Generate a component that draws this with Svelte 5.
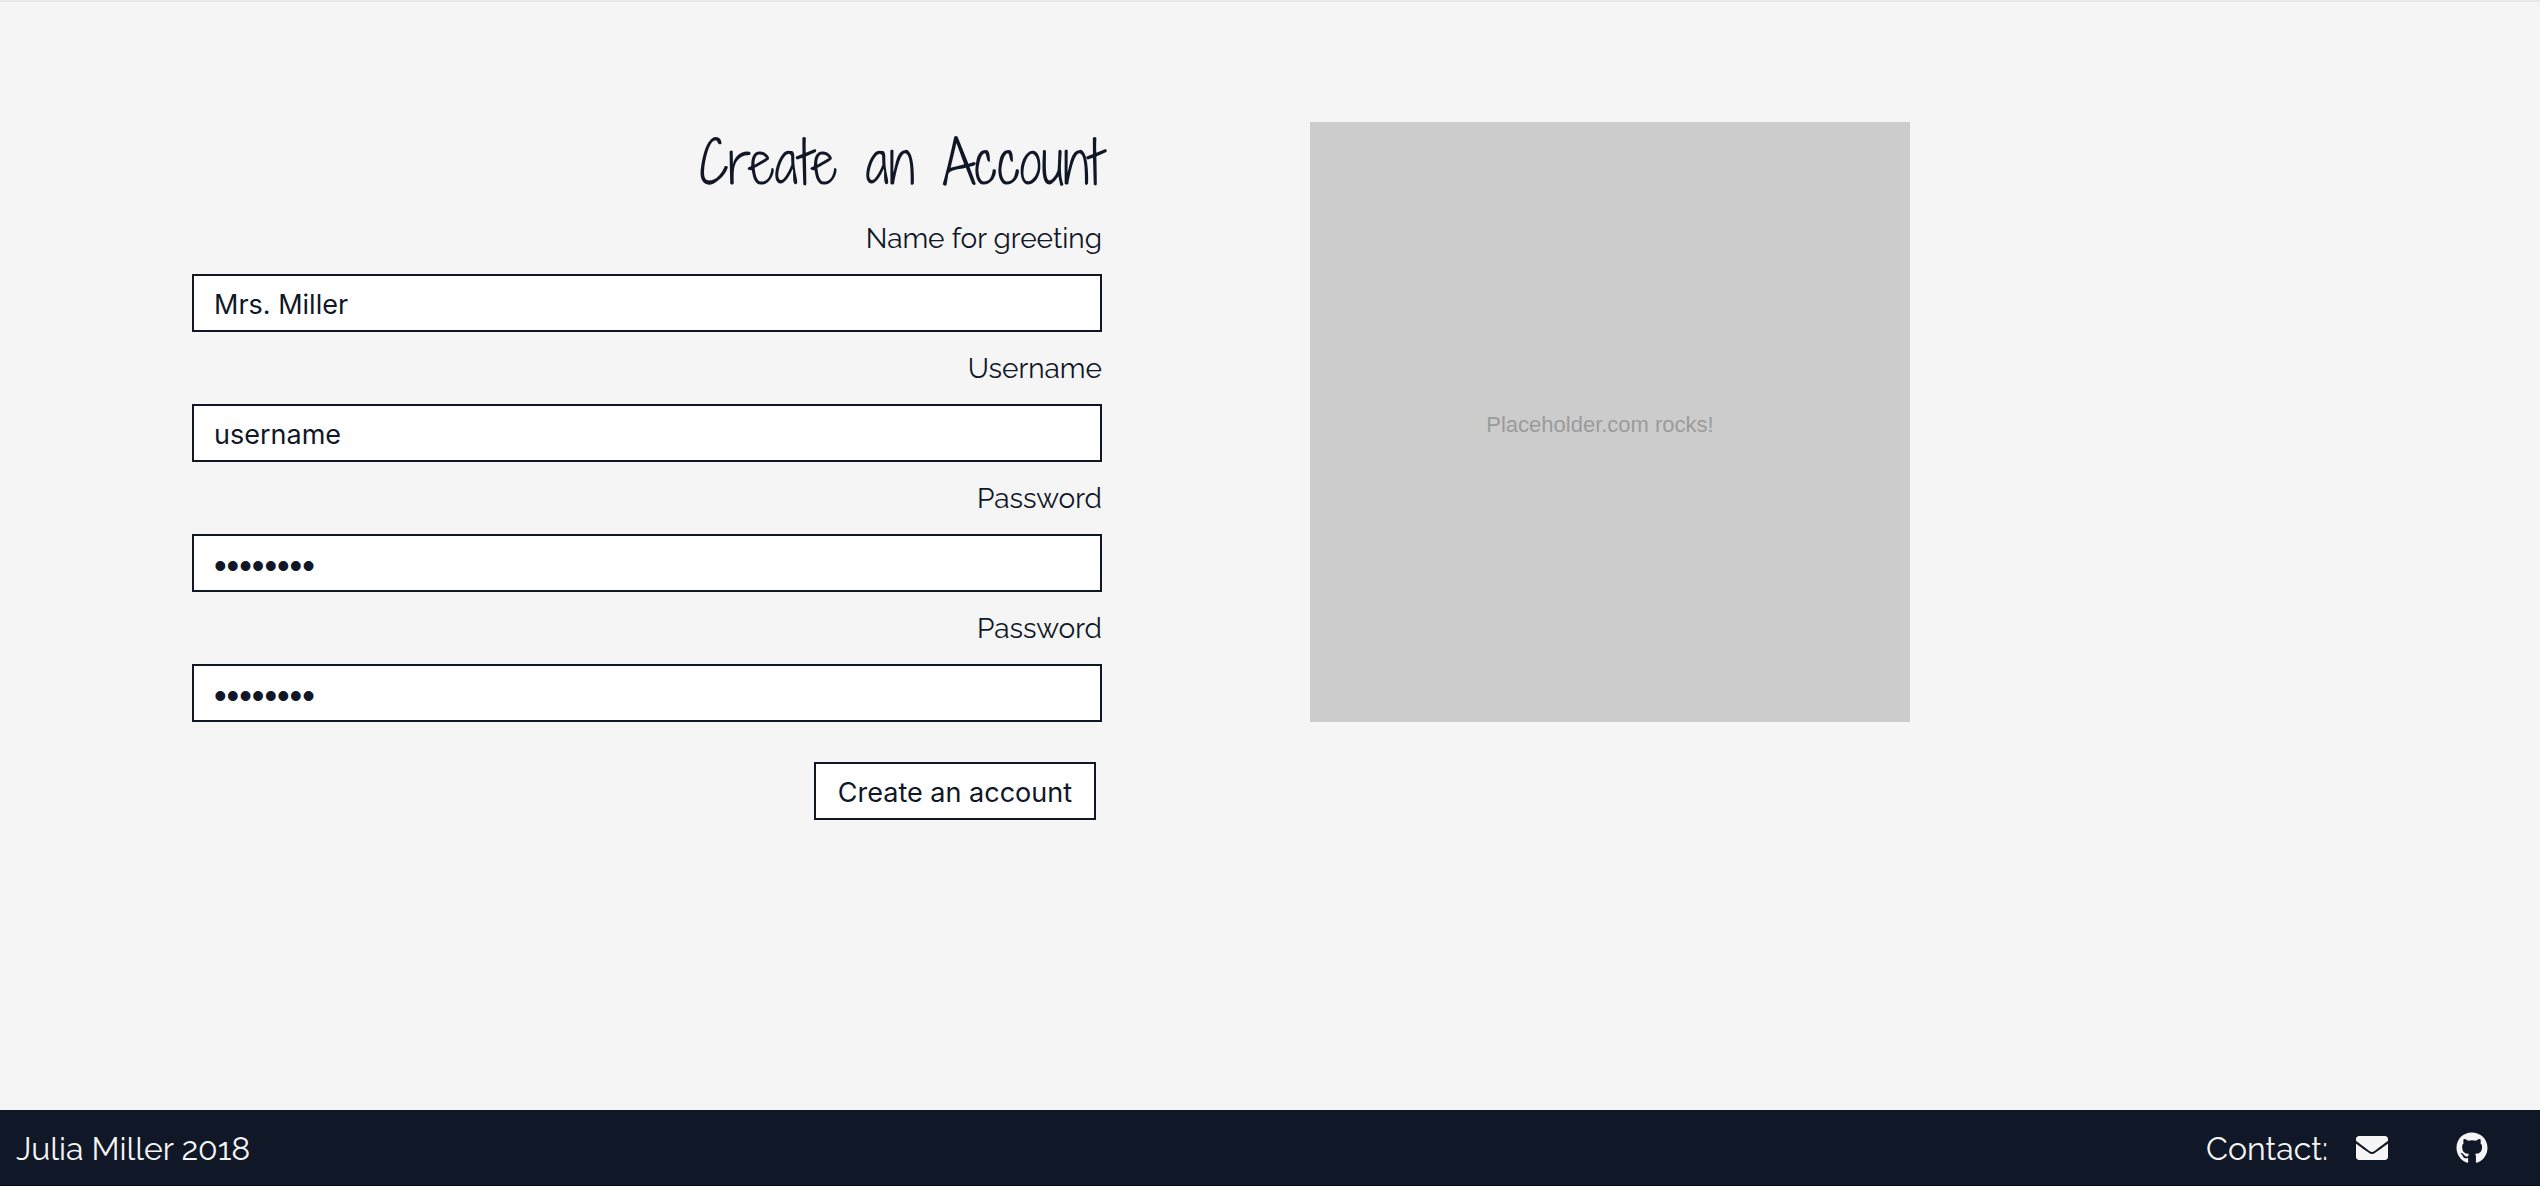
<script>
  let fields = $state([
    { id: 'greeting', label: 'Name for greeting', type: 'text', value: 'Mrs. Miller' },
    { id: 'username', label: 'Username', type: 'text', value: 'username' },
    { id: 'password', label: 'Password', type: 'password', value: 'password' },
    { id: 'password-confirm', label: 'Password', type: 'password', value: 'password' }
  ]);
</script>

<div class="page">
  <main>
    <form onsubmit={(event) => event.preventDefault()}>
      <h1>Create an Account</h1>
      {#each fields as field (field.id)}
        <label for={field.id}>{field.label}</label>
        <input id={field.id} type={field.type} bind:value={field.value} />
      {/each}
      <button type="submit">Create an account</button>
    </form>
    <div class="placeholder">Placeholder.com rocks!</div>
  </main>

  <footer>
    <span>Julia Miller 2018</span>
    <div class="contact">
      <span>Contact:</span>
      <a href="#email" aria-label="Email">
        <svg viewBox="0 0 512 512" aria-hidden="true">
          <path d="M502.3 190.8c3.9-3.1 9.7-.2 9.7 4.7V400c0 26.5-21.5 48-48 48H48c-26.5 0-48-21.5-48-48V195.6c0-5 5.7-7.8 9.7-4.7 22.4 17.4 52.1 39.5 154.1 113.6 21.1 15.4 56.7 47.8 92.2 47.6 35.7.3 72-32.8 92.3-47.6 102-74.1 131.6-96.3 154-113.7zM256 320c23.2.4 56.6-29.2 73.4-41.4 132.7-96.3 142.8-104.7 173.4-128.7 5.8-4.5 9.2-11.5 9.2-18.9v-19c0-26.5-21.5-48-48-48H48c-26.5 0-48 21.5-48 48v19c0 7.4 3.4 14.3 9.2 18.9 30.6 23.9 40.7 32.4 173.4 128.7 16.8 12.2 50.2 41.8 73.4 41.4z" />
        </svg>
      </a>
      <a href="#github" aria-label="GitHub">
        <svg viewBox="0 0 496 512" aria-hidden="true">
          <path d="M165.9 397.4c0 2-2.3 3.6-5.2 3.6-3.3.3-5.6-1.3-5.6-3.6 0-2 2.3-3.6 5.2-3.6 3-.3 5.6 1.3 5.6 3.6zm-31.1-4.5c-.7 2 1.3 4.3 4.3 4.9 2.6 1 5.6 0 6.2-2s-1.3-4.3-4.3-5.2c-2.6-.7-5.5.3-6.2 2.3zm44.2-1.7c-2.9.7-4.9 2.6-4.6 4.9.3 2 2.9 3.3 5.9 2.6 2.9-.7 4.9-2.6 4.6-4.6-.3-1.9-3-3.2-5.9-2.9zM244.8 8C106.1 8 0 113.3 0 252c0 110.9 69.8 205.8 169.5 239.2 12.8 2.3 17.3-5.6 17.3-12.1 0-6.2-.3-40.4-.3-61.4 0 0-70 15-84.7-29.8 0 0-11.4-29.1-27.8-36.6 0 0-22.9-15.7 1.6-15.4 0 0 24.9 2 38.6 25.8 21.9 38.6 58.6 27.5 72.9 20.9 2.3-16 8.8-27.1 16-33.7-55.9-6.2-112.3-14.3-112.3-110.5 0-27.5 7.6-41.3 23.6-58.9-2.6-6.5-11.1-33.3 2.6-67.9 20.9-6.5 69 27 69 27 20-5.6 41.5-8.5 62.8-8.5s42.8 2.9 62.8 8.5c0 0 48.1-33.6 69-27 13.7 34.7 5.2 61.4 2.6 67.9 16 17.7 25.8 31.5 25.8 58.9 0 96.5-58.9 104.2-114.8 110.5 9.2 7.9 17 22.9 17 46.4 0 33.7-.3 75.4-.3 83.6 0 6.5 4.6 14.4 17.3 12.1C428.2 457.8 496 362.9 496 252 496 113.3 383.5 8 244.8 8z" />
        </svg>
      </a>
    </div>
  </footer>
</div>

<style>
  :global(body) {
    margin: 0;
    background: #f5f5f5;
  }

  .page {
    display: flex;
    flex-direction: column;
    min-height: 100vh;
    box-sizing: border-box;
    border-top: 2px solid #e7e7e7;
    color: #101726;
    font-family: Raleway, Lato, sans-serif;
  }

  main {
    flex: 1;
    display: grid;
    grid-template-columns: minmax(0, 910fr) minmax(0, 1038fr);
    gap: 208px;
    align-items: start;
    padding: 120px 192px;
  }

  form {
    display: flex;
    flex-direction: column;
    align-items: flex-end;
  }

  h1 {
    margin: 0;
    font-family: 'Shadows Into Light Two', 'Shadows Into Light', Lato, sans-serif;
    font-size: 56px;
    font-weight: 400;
    line-height: 80px;
  }

  label {
    padding-top: 2px;
    font-size: 28px;
    line-height: 70px;
  }

  input,
  button {
    box-sizing: border-box;
    height: 58px;
    margin: 0;
    border: 2px solid #101726;
    border-radius: 0;
    background: #fff;
    color: #101726;
    font-family: Inter, Roboto, sans-serif;
    font-size: 27px;
    padding: 2px 20px 0;
  }

  input {
    width: 100%;
  }

  input[type='password'] {
    padding-top: 6px;
    font-family: 'Liberation Sans', sans-serif;
    font-size: 36px;
  }

  button {
    margin: 40px 6px 0 0;
    padding: 2px 22px 0;
  }

  .placeholder {
    display: flex;
    align-items: center;
    justify-content: center;
    box-sizing: border-box;
    width: 600px;
    max-width: 100%;
    aspect-ratio: 1;
    padding: 6px 20px 0 0;
    background: #ccc;
    color: #9b9b9b;
    font-family: 'Liberation Sans', sans-serif;
    font-size: 22px;
  }

  footer {
    display: flex;
    align-items: center;
    justify-content: space-between;
    box-sizing: border-box;
    height: 76px;
    padding: 0 52px 0 16px;
    border-bottom: 1px solid #0a0e18;
    background: #101726;
    color: #f5f5f5;
    font-size: 32px;
  }

  footer span {
    padding-top: 2px;
  }

  .contact {
    display: flex;
    align-items: center;
  }

  a {
    display: flex;
    margin-left: 28px;
    color: inherit;
  }

  a + a {
    margin-left: 68px;
  }

  svg {
    width: 32px;
    height: 32px;
    fill: currentColor;
  }
</style>
